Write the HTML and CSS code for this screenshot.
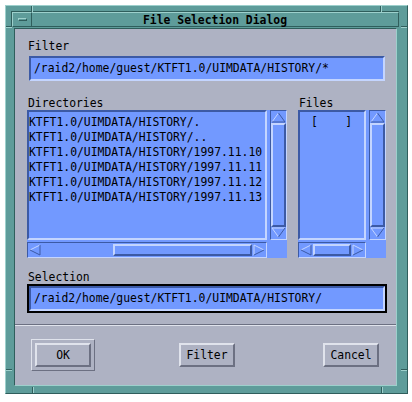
FILE: index.html
```html
<!DOCTYPE html>
<html lang="en">
<head>
    <meta charset="UTF-8">
    <title>File Selection Dialog</title>
    <link rel="stylesheet" href="styles.css">
</head>
<body>
    <div class="window">
        <div class="notch notch-v" id="n-top-l"></div>
        <div class="notch notch-v" id="n-top-r"></div>
        <div class="notch notch-v" id="n-bot-l"></div>
        <div class="notch notch-v" id="n-bot-r"></div>
        <div class="notch notch-h" id="n-left-t"></div>
        <div class="notch notch-h" id="n-right-t"></div>
        <div class="notch notch-h" id="n-left-b"></div>
        <div class="notch notch-h" id="n-right-b"></div>

        <div class="titlebar">
            <div class="menu-btn"><span class="menu-bar"></span></div>
            <div class="title">File Selection Dialog</div>
        </div>

        <div class="client">
            <div class="label">Filter</div>
            <div class="field-wrap">
                <div class="field">/raid2/home/guest/KTFT1.0/UIMDATA/HISTORY/*</div>
            </div>

            <div class="lists">
                <div class="group dirs">
                    <div class="label">Directories</div>
                    <div class="scroll">
                        <div class="viewport">
                            <div class="row">KTFT1.0/UIMDATA/HISTORY/.</div>
                            <div class="row">KTFT1.0/UIMDATA/HISTORY/..</div>
                            <div class="row">KTFT1.0/UIMDATA/HISTORY/1997.11.10</div>
                            <div class="row">KTFT1.0/UIMDATA/HISTORY/1997.11.11</div>
                            <div class="row">KTFT1.0/UIMDATA/HISTORY/1997.11.12</div>
                            <div class="row">KTFT1.0/UIMDATA/HISTORY/1997.11.13</div>
                        </div>
                        <div class="vsb">
                            <svg class="arrow-v" width="15" height="11" viewBox="0 0 15 11"><polygon points="7.5,1 14,10 1,10" fill="#7299ff"/><polyline points="1,10 7.5,1" stroke="#c4d5ff" fill="none"/><polyline points="7.5,1 14,10 1,10" stroke="#3c5aa5" fill="none"/></svg>
                            <div class="thumb"></div>
                            <svg class="arrow-v" width="15" height="11" viewBox="0 0 15 11"><polygon points="1,1 14,1 7.5,10" fill="#7299ff"/><polyline points="7.5,10 1,1 14,1" stroke="#c4d5ff" fill="none"/><polyline points="14,1 7.5,10" stroke="#3c5aa5" fill="none"/></svg>
                        </div>
                        <div class="hsb">
                            <svg class="arrow-h" width="12" height="12" viewBox="0 0 12 12"><polygon points="1,6 11,1 11,11" fill="#7299ff"/><polyline points="11,1 1,6" stroke="#c4d5ff" fill="none"/><polyline points="1,6 11,11 11,1" stroke="#3c5aa5" fill="none"/></svg>
                            <div class="track"><div class="thumb thumb-dirs"></div></div>
                            <svg class="arrow-h" width="12" height="12" viewBox="0 0 12 12"><polygon points="1,1 11,6 1,11" fill="#7299ff"/><polyline points="1,11 1,1 11,6" stroke="#c4d5ff" fill="none"/><polyline points="11,6 1,11" stroke="#3c5aa5" fill="none"/></svg>
                        </div>
                        <div class="corner"></div>
                    </div>
                </div>

                <div class="group files">
                    <div class="label">Files</div>
                    <div class="scroll">
                        <div class="viewport">
                            <div class="row empty">[    ]</div>
                        </div>
                        <div class="vsb">
                            <svg class="arrow-v" width="15" height="11" viewBox="0 0 15 11"><polygon points="7.5,1 14,10 1,10" fill="#7299ff"/><polyline points="1,10 7.5,1" stroke="#c4d5ff" fill="none"/><polyline points="7.5,1 14,10 1,10" stroke="#3c5aa5" fill="none"/></svg>
                            <div class="thumb"></div>
                            <svg class="arrow-v" width="15" height="11" viewBox="0 0 15 11"><polygon points="1,1 14,1 7.5,10" fill="#7299ff"/><polyline points="7.5,10 1,1 14,1" stroke="#c4d5ff" fill="none"/><polyline points="14,1 7.5,10" stroke="#3c5aa5" fill="none"/></svg>
                        </div>
                        <div class="hsb">
                            <svg class="arrow-h" width="12" height="12" viewBox="0 0 12 12"><polygon points="1,6 11,1 11,11" fill="#7299ff"/><polyline points="11,1 1,6" stroke="#c4d5ff" fill="none"/><polyline points="1,6 11,11 11,1" stroke="#3c5aa5" fill="none"/></svg>
                            <div class="track"><div class="thumb"></div></div>
                            <svg class="arrow-h" width="12" height="12" viewBox="0 0 12 12"><polygon points="1,1 11,6 1,11" fill="#7299ff"/><polyline points="1,11 1,1 11,6" stroke="#c4d5ff" fill="none"/><polyline points="11,6 1,11" stroke="#3c5aa5" fill="none"/></svg>
                        </div>
                        <div class="corner"></div>
                    </div>
                </div>
            </div>

            <div class="label sel-label">Selection</div>
            <div class="field-wrap focused">
                <div class="field">/raid2/home/guest/KTFT1.0/UIMDATA/HISTORY/</div>
            </div>

            <div class="separator"></div>

            <div class="buttons">
                <div class="btn-ring default"><button>OK</button></div>
                <div class="btn-ring"><button>Filter</button></div>
                <div class="btn-ring"><button>Cancel</button></div>
            </div>
        </div>
    </div>
</body>
</html>
```

FILE: styles.css
```css
:root {
    --mono: "DejaVu Sans Mono", "Liberation Mono", monospace;
    --teal: #5e9c9a;
    --teal-lt: #9dd0cc;
    --teal-dk: #2f5e5c;
    --grey: #aeb2c3;
    --grey-lt: #e0e3ec;
    --grey-dk: #6c7082;
    --blue: #7299ff;
    --blue-lt: #c4d5ff;
    --blue-dk: #3c5aa5;
}
body {
    margin: 0;
    padding: 5px 0 0 5px;
    background: #ffffff;
    font-family: var(--mono);
    font-size: 11.4px;
    color: #000;
}
.window {
    position: relative;
    width: 403px;
    height: 389px;
    box-sizing: border-box;
    background: var(--teal);
    border: 1px solid;
    border-color: var(--teal-lt) var(--teal-dk) var(--teal-dk) var(--teal-lt);
    padding: 5px 8px 5px 5px;
    display: flex;
    flex-direction: column;
}

/* resize corner marks on the frame */
.notch {
    position: absolute;
    background: var(--teal-dk);
}
.notch-v { width: 1px; height: 6px; border-right: 1px solid var(--teal-lt); }
.notch-h { height: 1px; width: 6px; border-bottom: 1px solid var(--teal-lt); }
#n-top-l { left: 25px; top: 0; }
#n-top-r { left: 374px; top: 0; }
#n-bot-l { left: 26px; bottom: 0; }
#n-bot-r { left: 375px; bottom: 0; }
#n-left-t { left: 0; top: 20px; }
#n-right-t { right: 0; top: 20px; }
#n-left-b { left: 0; top: 363px; }
#n-right-b { right: 0; top: 363px; }

.titlebar {
    height: 16px;
    box-sizing: border-box;
    display: flex;
    border-top: 1px solid var(--teal-dk);
    border-left: 1px solid var(--teal-dk);
    background: var(--teal);
}
.menu-btn {
    width: 20px;
    box-sizing: border-box;
    border: 1px solid;
    border-color: var(--teal-lt) var(--teal-dk) var(--teal-dk) var(--teal-lt);
    display: flex;
    align-items: center;
    justify-content: center;
}
.menu-bar {
    width: 9px;
    height: 3px;
    box-sizing: border-box;
    border: 1px solid;
    border-color: var(--teal-lt) var(--teal-dk) var(--teal-dk) var(--teal-lt);
}
.title {
    flex: 1;
    text-align: center;
    font-weight: bold;
    line-height: 14px;
    border-top: 1px solid var(--teal-lt);
    border-bottom: 1px solid var(--teal-dk);
    border-right: 1px solid var(--teal-dk);
}

.client {
    flex: 1;
    margin: 1px 2px 2px 3px;
    background: var(--grey);
    border: 1px solid;
    border-color: var(--teal-dk) var(--teal-lt) var(--teal-lt) var(--teal-dk);
    padding: 10px 9px 0 12px;
    display: flex;
    flex-direction: column;
}
.label {
    height: 14px;
    line-height: 14px;
    padding-left: 1px;
}
.field-wrap {
    margin-top: 1px;
    border: 2px solid transparent;
}
.field-wrap.focused {
    border-color: #000;
}
.field {
    height: 25px;
    box-sizing: border-box;
    line-height: 21px;
    padding-left: 3px;
    background: var(--blue);
    border: 2px solid;
    border-color: var(--blue-dk) var(--blue-lt) var(--blue-lt) var(--blue-dk);
    white-space: pre;
    overflow: hidden;
}

.lists {
    display: flex;
    gap: 11px;
    margin-top: 13px;
}
.dirs { width: 260px; }
.files { width: 88px; }
.scroll {
    display: grid;
    grid-template-columns: 1fr 17px;
    grid-template-rows: 130px 16px;
    column-gap: 3px;
    row-gap: 2px;
    background: var(--blue);
}
.viewport {
    border: 2px solid;
    border-color: var(--blue-dk) var(--blue-lt) var(--blue-lt) var(--blue-dk);
    padding-top: 3px;
    overflow: hidden;
}
.row {
    height: 15px;
    line-height: 15px;
    white-space: pre;
}
.row.empty {
    padding-left: 11px;
}
.vsb {
    display: flex;
    flex-direction: column;
    border: 1px solid;
    border-color: var(--blue-dk) var(--blue-lt) var(--blue-lt) var(--blue-dk);
    padding: 1px 0 1px 0;
}
.arrow-v, .arrow-h { display: block; flex: none; }
.vsb .thumb { flex: 1; }
.thumb {
    box-sizing: border-box;
    border: 2px solid;
    border-color: var(--blue-lt) var(--blue-dk) var(--blue-dk) var(--blue-lt);
}
.hsb {
    display: flex;
    align-items: center;
    border: 1px solid;
    border-color: var(--blue-dk) var(--blue-lt) var(--blue-lt) var(--blue-dk);
    padding: 0 1px;
}
.track {
    flex: 1;
    height: 12px;
    display: flex;
    padding: 0 1px;
}
.track .thumb { flex: 1; }
.thumb-dirs { margin-left: 71px; }

.sel-label { margin-top: 12px; }
.field-wrap.focused { margin-top: 0; }

.separator {
    margin: 11px -9px 0 -12px;
    border-top: 1px solid var(--grey-dk);
    border-bottom: 1px solid var(--grey-lt);
}

.buttons {
    display: flex;
    justify-content: space-between;
    margin: 13px 4px 0 4px;
}
.btn-ring {
    width: 64px;
    height: 32px;
    box-sizing: border-box;
    padding: 3px;
    border: 1px solid transparent;
}
.btn-ring.default {
    border-color: var(--grey-lt) var(--grey-dk) var(--grey-dk) var(--grey-lt);
}
button {
    width: 100%;
    height: 100%;
    margin: 0;
    padding: 0;
    font-family: var(--mono);
    font-size: 11.4px;
    color: #000;
    background: var(--grey);
    border: 2px solid;
    border-color: var(--grey-lt) var(--grey-dk) var(--grey-dk) var(--grey-lt);
}
```
